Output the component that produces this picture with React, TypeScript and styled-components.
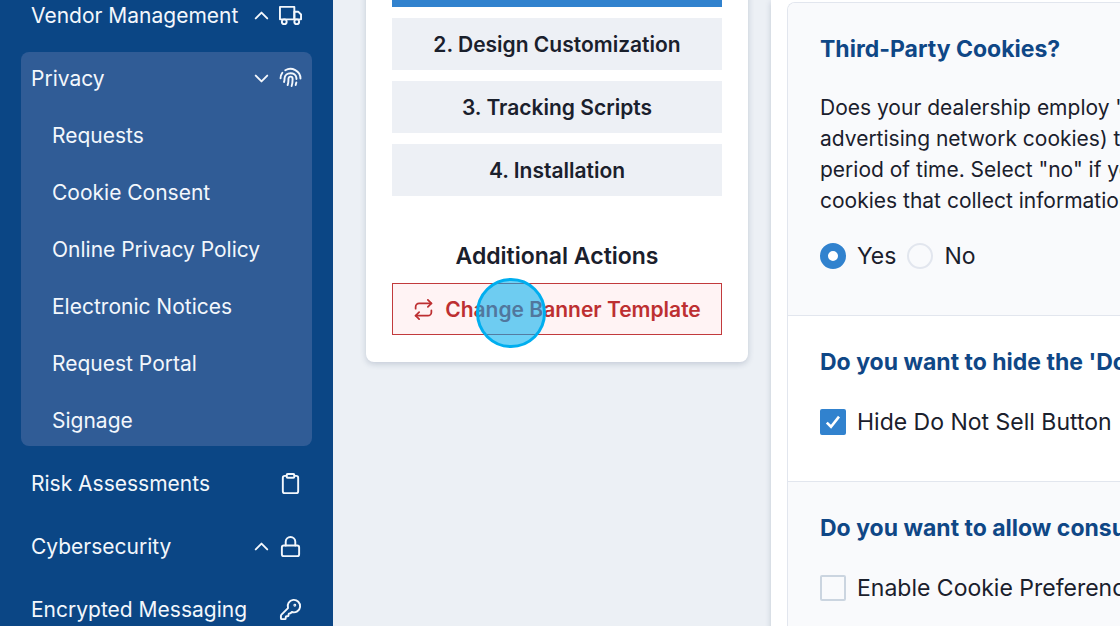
import React from "react";
import styled, { createGlobalStyle } from "styled-components";
import { FiTruck, FiClipboard, FiLock, FiChevronUp, FiChevronDown, FiRepeat } from "react-icons/fi";
import { LuKeyRound } from "react-icons/lu";

const GlobalStyle = createGlobalStyle`
  *, *::before, *::after { box-sizing: border-box; }
  body {
    margin: 0;
    background: #ecf0f5;
    color: #1a202c;
    font-family: Inter, "Liberation Sans", sans-serif;
    font-size: 21px;
    line-height: 31px;
  }
  h2, h3, p, ul { margin: 0; padding: 0; }
  ul { list-style: none; }
`;

const Page = styled.div`
  display: flex;
  height: 100vh;
  overflow: hidden;
`;

const Sidebar = styled.nav`
  flex: 0 0 333px;
  padding: 0 21px;
  background: #0b4685;
  color: #f3f7fc;
`;

const NavList = styled.ul`
  display: flex;
  flex-direction: column;
  gap: 11px;
  margin-top: -11px;
`;

const NavGroup = styled.li<{ $open?: boolean }>`
  border-radius: 8px;
  background: ${(p) => (p.$open ? "#305c96" : "transparent")};
`;

const NavButton = styled.button`
  display: flex;
  align-items: center;
  gap: 6px;
  width: 100%;
  height: 52px;
  padding: 0 10px;
  border: 0;
  background: none;
  color: inherit;
  font: inherit;
  text-align: left;
  cursor: pointer;
`;

const NavText = styled.span`
  flex: 1;
  white-space: nowrap;
`;

const SubList = styled.ul`
  display: grid;
  gap: 5px;
  padding-top: 5px;
`;

const SubLink = styled.a`
  display: flex;
  align-items: center;
  height: 52px;
  padding: 0 31px;
  color: inherit;
  text-decoration: none;
`;

const Content = styled.main`
  flex: 1;
  min-width: 0;
  display: flex;
  align-items: flex-start;
  gap: 23px;
  padding-left: 33px;
`;

const StepsCard = styled.section`
  flex: 0 0 382px;
  margin-top: -71px;
  padding: 26px 26px 27px;
  border-radius: 8px;
  background: #fff;
  box-shadow: 0 2px 6px rgba(30, 50, 90, 0.2);
`;

const Steps = styled.div`
  display: grid;
  gap: 11px;
`;

const StepButton = styled.button<{ $active?: boolean }>`
  height: 52px;
  border: 0;
  background: ${(p) => (p.$active ? "#3182ce" : "#edf0f5")};
  color: ${(p) => (p.$active ? "#fff" : "#1a202c")};
  font: inherit;
  font-weight: 600;
  cursor: pointer;
`;

const ActionsTitle = styled.h3`
  margin: 45px 0 11px;
  font-size: 23px;
  font-weight: 600;
  line-height: 31px;
  text-align: center;
`;

const TemplateButton = styled.button`
  position: relative;
  display: flex;
  align-items: center;
  justify-content: center;
  gap: 11px;
  width: 100%;
  height: 52px;
  border: 1px solid #c23a3c;
  background: #fff3f4;
  color: #bd2f31;
  font: inherit;
  font-weight: 600;
  cursor: pointer;
`;

const ClickMarker = styled.span`
  position: absolute;
  top: -6px;
  left: 83px;
  width: 70px;
  height: 70px;
  border: 3px solid #00aeef;
  border-radius: 50%;
  background: rgba(0, 174, 239, 0.57);
  pointer-events: none;
`;

const Panel = styled.section`
  flex: 1;
  min-width: 0;
  min-height: 100vh;
  padding: 2px 0 0 16px;
  background: #fff;
  box-shadow: 0 2px 6px rgba(30, 50, 90, 0.2);
`;

const Questions = styled.div`
  border: 1px solid #e2e6ee;
  border-width: 1px 0 0 1px;
  border-radius: 8px 0 0 0;
  overflow: hidden;
`;

const Question = styled.section<{ $tinted?: boolean }>`
  padding: 31px 0 42px 32px;
  border-bottom: 1px solid #e2e6ee;
  background: ${(p) => (p.$tinted ? "#f9fafc" : "#fff")};
  white-space: nowrap;
`;

const QuestionTitle = styled.h2`
  margin-bottom: 27px;
  color: #0f4786;
  font-size: 23px;
  font-weight: 700;
  line-height: 31px;
`;

const Description = styled.p`
  margin-bottom: 23px;
`;

const Choices = styled.div`
  display: flex;
  gap: 11px;
`;

const Choice = styled.label`
  display: flex;
  align-items: center;
  gap: 11px;
  font-size: 23px;
  line-height: 34px;
`;

const Radio = styled.input.attrs({ type: "radio" })`
  appearance: none;
  width: 26px;
  height: 26px;
  margin: 0;
  border: 2px solid #e2e6ee;
  border-radius: 50%;
  &:checked {
    border: 8px solid #3182ce;
    background: #fff;
  }
`;

const CheckFrame = styled.span`
  display: grid;
  width: 26px;
  height: 26px;
  > * { grid-area: 1 / 1; }
  > svg { place-self: center; pointer-events: none; }
`;

const Checkbox = styled.input.attrs({ type: "checkbox" })`
  appearance: none;
  width: 26px;
  height: 26px;
  margin: 0;
  border: 2px solid #cbd5e0;
  border-radius: 2px;
  &:checked {
    border-color: #3182ce;
    background: #3182ce;
  }
`;

const privacyLinks = [
  "Requests",
  "Cookie Consent",
  "Online Privacy Policy",
  "Electronic Notices",
  "Request Portal",
  "Signage",
];

function FingerprintIcon() {
  return (
    <svg width="23" height="23" viewBox="0 0 24 24" fill="none" stroke="currentColor" strokeWidth="2" strokeLinecap="round" aria-hidden="true">
      <path d="M1.6 11.8C1.6 9.4 2.3 7.6 3.5 6" />
      <path d="M6.6 3.4C13.2 -.4 22.4 4 22.4 12" />
      <path d="M5.2 15.6C5.9 14.2 5.7 13 5.8 11.8C6.2 4.8 17.6 4.6 18.2 11.6V12.6" />
      <path d="M9 18.8C10.1 16.4 9.7 14.4 9.9 12.2C10.2 9.3 14.2 9.4 14.2 12.4C14.2 15 14 17.6 13.2 19.8" />
      <path d="M18.1 16.2 17.4 18.8" />
    </svg>
  );
}

function Check({ label, checked }: { label: string; checked?: boolean }) {
  return (
    <Choice>
      <CheckFrame>
        <Checkbox defaultChecked={checked} />
        {checked && (
          <svg width="16" height="14" viewBox="0 0 16 14" fill="none" stroke="#fff" strokeWidth="2.6">
            <path d="M1.8 7.6 6 11.7 14 1.6" />
          </svg>
        )}
      </CheckFrame>
      {label}
    </Choice>
  );
}

export default function App() {
  return (
    <>
      <GlobalStyle />
      <Page>
        <Sidebar aria-label="Main">
          <NavList>
            <NavGroup>
              <NavButton>
                <NavText>Vendor Management</NavText>
                <FiChevronUp size={23} />
                <FiTruck size={23} />
              </NavButton>
            </NavGroup>
            <NavGroup $open>
              <NavButton aria-expanded="true">
                <NavText>Privacy</NavText>
                <FiChevronDown size={23} />
                <FingerprintIcon />
              </NavButton>
              <SubList>
                {privacyLinks.map((text) => (
                  <li key={text}>
                    <SubLink href="#">{text}</SubLink>
                  </li>
                ))}
              </SubList>
            </NavGroup>
            <NavGroup>
              <NavButton>
                <NavText>Risk Assessments</NavText>
                <FiClipboard size={23} />
              </NavButton>
            </NavGroup>
            <NavGroup>
              <NavButton>
                <NavText>Cybersecurity</NavText>
                <FiChevronUp size={23} />
                <FiLock size={23} />
              </NavButton>
            </NavGroup>
            <NavGroup>
              <NavButton>
                <NavText>Encrypted Messaging</NavText>
                <LuKeyRound size={23} />
              </NavButton>
            </NavGroup>
          </NavList>
        </Sidebar>
        <Content>
          <StepsCard>
            <Steps>
              <StepButton $active aria-current="step" aria-label="Step 1" />
              <StepButton>2. Design Customization</StepButton>
              <StepButton>3. Tracking Scripts</StepButton>
              <StepButton>4. Installation</StepButton>
            </Steps>
            <ActionsTitle>Additional Actions</ActionsTitle>
            <TemplateButton>
              <FiRepeat size={21} />
              Change Banner Template
              <ClickMarker />
            </TemplateButton>
          </StepsCard>
          <Panel>
            <Questions>
              <Question $tinted>
                <QuestionTitle>Third-Party Cookies?</QuestionTitle>
                <Description>
                  Does your dealership employ "third-party
                  <br />
                  advertising network cookies) that
                  <br />
                  period of time. Select "no" if you
                  <br />
                  cookies that collect information
                </Description>
                <Choices role="radiogroup">
                  <Choice>
                    <Radio name="third-party" defaultChecked />
                    Yes
                  </Choice>
                  <Choice>
                    <Radio name="third-party" />
                    No
                  </Choice>
                </Choices>
              </Question>
              <Question>
                <QuestionTitle>Do you want to hide the 'Do Not</QuestionTitle>
                <Check label="Hide Do Not Sell Button" checked />
              </Question>
              <Question $tinted>
                <QuestionTitle>Do you want to allow consumers</QuestionTitle>
                <Check label="Enable Cookie Preferences" />
              </Question>
            </Questions>
          </Panel>
        </Content>
      </Page>
    </>
  );
}
